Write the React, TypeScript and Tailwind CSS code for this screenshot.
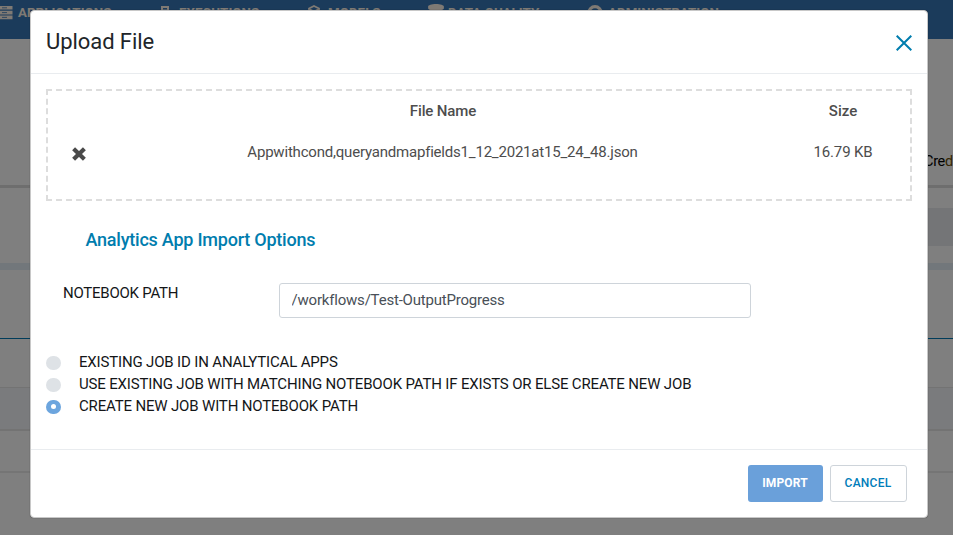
import { FaDatabase } from "react-icons/fa";
import type { ReactNode } from "react";

function NavItem({ icon, label, className }: { icon: ReactNode; label: string; className: string }) {
  return (
    <div className={`flex shrink-0 items-center whitespace-nowrap ${className}`}>
      {icon}
      <span>{label}</span>
    </div>
  );
}

function ServerIcon() {
  return (
    <svg className="h-[14px] w-[13px]" viewBox="0 0 13 14" fill="currentColor">
      <path d="M0 0h12.5v3.6H0zM0 4.8h12.5v3.6H0zM0 9.6h12.5v3.6H0z" />
      <path d="M2 1.8h5M2 6.6h5M2 11.4h5" stroke="#3777b6" strokeWidth=".8" />
    </svg>
  );
}

function DeviceIcon() {
  return (
    <svg className="h-[15px] w-[9px]" viewBox="0 0 9 15" fill="none" stroke="currentColor" strokeWidth="2">
      <rect x="1" y="1" width="6" height="12" />
      <path d="M2 4h5" strokeWidth="1" />
    </svg>
  );
}

function CubeIcon() {
  return (
    <svg className="h-[17px] w-[12px]" viewBox="0 0 12 17" fill="none" stroke="currentColor" strokeWidth="1.8">
      <path d="M6 1 11 3.5v8.5L6 15 1 12v-8.5zM1.5 4.3 6 6.5 10.5 4.3M6 6v8" />
    </svg>
  );
}

function UserRingIcon() {
  return (
    <svg className="h-[16px] w-[16px]" viewBox="0 0 16 16" fill="none" stroke="currentColor">
      <circle cx="8" cy="8" r="6.3" strokeWidth="3.2" />
      <circle cx="8" cy="8" r="2" fill="currentColor" stroke="none" />
    </svg>
  );
}

function PageBehind() {
  return (
    <div className="flex h-full flex-col bg-white text-black">
      <nav className="flex h-[39px] shrink-0 items-start bg-[#3777b6] pt-[4px] text-[13.3px] leading-[18px] font-bold tracking-[0.05px] text-[#fff4e8]">
        <NavItem className="w-[161px] gap-[5px]" icon={<ServerIcon />} label="APPLICATIONS" />
        <NavItem className="w-[147px] gap-[9px]" icon={<DeviceIcon />} label="EXECUTIONS" />
        <NavItem className="w-[120px] gap-[8px]" icon={<CubeIcon />} label="MODELS" />
        <NavItem className="w-[159px] gap-[4px]" icon={<FaDatabase className="h-[18px] w-[16px]" />} label="DATA QUALITY" />
        <NavItem className="gap-[5px]" icon={<UserRingIcon />} label="ADMINISTRATION" />
      </nav>
      <div className="flex h-[149px] shrink-0 items-end justify-end border-b-[3px] border-[#dcdcdc] pb-[13px] text-[14.5px] leading-5">
        <div className="w-[29px] whitespace-nowrap tracking-[-0.3px]">
          Cre<span className="text-[#6b4c00]">d</span>
        </div>
      </div>
      <div className="flex h-[75px] shrink-0 items-center justify-end">
        <div className="mt-[3px] h-[38px] w-[60px] bg-[#e8ebef]" />
      </div>
      <div className="h-[7px] shrink-0 bg-[#e5eef6]" />
      <div className="h-[69px] shrink-0 border-b border-[#0078b4]" />
      <div className="h-[49px] shrink-0 border-b border-[#e6e6e6]" />
      <div className="h-[43px] shrink-0 border-b-2 border-[#e7e7e7] bg-[#f5f7fb]" />
      <div className="h-[42px] shrink-0 border-b-2 border-[#ebebeb]" />
    </div>
  );
}

function Option({ label, checked = false }: { label: string; checked?: boolean }) {
  return (
    <label className="flex h-[22px] items-center text-[15px] tracking-[-0.165px] text-[#141618]">
      <span
        className={`mt-[2px] mr-[18px] flex h-[14px] w-[15px] items-center justify-center rounded-full ${
          checked ? "bg-[#6ca5de]" : "bg-[#dee2e6]"
        }`}
      >
        {checked && <span className="mb-[1px] h-[5px] w-[5px] rounded-full bg-white" />}
      </span>
      <span className="mt-[1px] whitespace-nowrap">{label}</span>
    </label>
  );
}

export default function App() {
  return (
    <div className="relative h-[535px] w-[953px] overflow-hidden font-['Roboto',sans-serif]">
      <PageBehind />
      <div className="absolute inset-0 bg-black/50" />
      <div className="absolute top-[10px] left-[30px] flex h-[508px] w-[898px] flex-col rounded-[4px] border border-[#c8c8c8] bg-white shadow-[0_0_1px_rgba(0,0,0,0.6)]">
        <header className="flex h-[63px] shrink-0 items-start justify-between border-b border-[#e9ecef] pr-[15px] pl-[15px]">
          <h1 className="mt-[16px] text-[22px] leading-[30px] font-normal tracking-[-0.07px] text-[#212529]">Upload File</h1>
          <svg className="mt-[24px] h-[16px] w-[16px]" viewBox="0 0 16 16" fill="none" stroke="#007dae" strokeWidth="2">
            <path d="M.7.7 15.3 15.3M15.3.7.7 15.3" />
          </svg>
        </header>
        <main className="flex grow flex-col px-[15px] pt-[15px]">
          <section className="grid h-[112px] shrink-0 grid-cols-[62px_665px_135px] grid-rows-[41px_41px] border-2 border-dashed border-[#dddddd] text-center text-[15px] text-[#4d4d4d]">
            <span />
            <span className="pt-[9px] pl-[1px] leading-[22px] font-medium tracking-[-0.13px]">File Name</span>
            <span className="pt-[9px] pl-[1px] leading-[22px] font-medium">Size</span>
            <span className="flex items-start justify-center pt-[14.5px]">
              <svg className="h-[14px] w-[14px]" viewBox="0 0 14 14" fill="none" stroke="#4a4a4a" strokeWidth="4.2">
                <path d="M1.6 1.8 12.4 12.2M12.4 1.8 1.6 12.2" />
              </svg>
            </span>
            <span className="pt-[9px] leading-[22px] tracking-[-0.2px]">
              Appwithcond,queryandmapfields1_12_2021at15_24_48.json
            </span>
            <span className="pt-[9px] pl-[1px] leading-[22px] tracking-[-0.13px]">16.79 KB</span>
          </section>
          <h2 className="mt-[26px] ml-[39.5px] text-[18px] leading-[26px] font-medium tracking-[-0.225px] text-[#007dae]">
            Analytics App Import Options
          </h2>
          <div className="mt-[30px] flex">
            <label className="w-[216px] shrink-0 pl-[17px] text-[15px] leading-5 tracking-[-0.24px] text-[#141618]">
              NOTEBOOK PATH
            </label>
            <input
              className="ml-[17px] h-[35px] w-[472px] rounded-[3px] border border-[#ced4da] px-[11.5px] pb-[2px] text-[15px] tracking-[-0.2px] text-[#495057] outline-none"
              defaultValue="/workflows/Test-OutputProgress"
            />
          </div>
          <div className="mt-[33px]">
            <Option label="EXISTING JOB ID IN ANALYTICAL APPS" />
            <Option label="USE EXISTING JOB WITH MATCHING NOTEBOOK PATH IF EXISTS OR ELSE CREATE NEW JOB" />
            <Option label="CREATE NEW JOB WITH NOTEBOOK PATH" checked />
          </div>
        </main>
        <footer className="flex h-[68px] shrink-0 items-start justify-end gap-[7px] border-t border-[#e9ecef] pt-[15px] pr-[20px] text-[12px]">
          <button className="h-[37px] w-[75px] rounded-[3px] bg-[#6aa0da] pr-[1px] pb-[2px] font-bold tracking-[0.15px] text-white">
            IMPORT
          </button>
          <button className="h-[37px] w-[77px] rounded-[3px] border border-[#ced4da] bg-white pr-[1px] pb-[2px] font-medium tracking-[0.25px] text-[#007dba]">
            CANCEL
          </button>
        </footer>
      </div>
    </div>
  );
}
